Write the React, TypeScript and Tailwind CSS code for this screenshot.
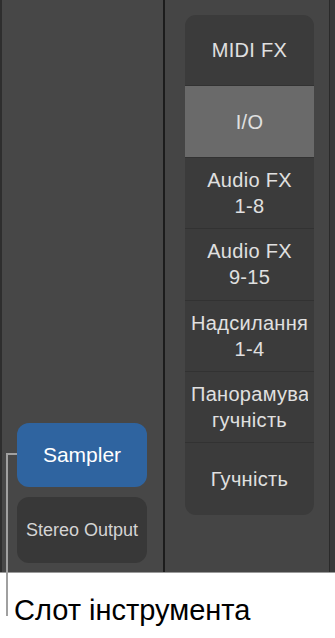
import React from "react";

const font = { fontFamily: '"Liberation Sans", Arial, sans-serif' };

function Row({ lines, active, last }: { lines: string[]; active?: boolean; last?: boolean }) {
  return (
    <div
      className={`h-[71.4px] flex flex-col items-center justify-center ${active ? "bg-[#6a6a6a]" : ""} ${last ? "" : "border-b border-[#323232]"}`}
    >
      <div className="w-[117px] overflow-hidden whitespace-nowrap text-center text-[20px] leading-[26px] tracking-[0.3px] text-[#e0e0e0]">
        {lines.map((l, i) => (
          <div key={i}>{l}</div>
        ))}
      </div>
    </div>
  );
}

export default function App() {
  return (
    <div className="relative w-[335px] h-[638px] bg-white overflow-hidden" style={font}>
      <div className="flex h-[573px] border-b border-[#9a9a9a]">
        <div className="w-[2px] bg-[#2e2e2e]" />
        <div className="w-[161px] bg-[#474747] flex flex-col justify-end pl-[15px] pb-[9px] gap-[10px]">
          <div className="w-[130px] h-[64px] rounded-[12px] bg-[#2f64a0] flex items-center justify-center text-white text-[21px]">
            Sampler
          </div>
          <div className="w-[130px] h-[66px] rounded-[12px] bg-[#383838] flex items-center justify-center text-[#d4d4d4] text-[18px] whitespace-nowrap">
            Stereo Output
          </div>
        </div>
        <div className="w-[2px] bg-[#1c1c1c]" />
        <div className="w-[164px] bg-[#454545] pl-[20px] pt-[15px]">
          <div className="w-[129px] h-[500px] rounded-[11px] bg-[#3b3b3b] overflow-hidden flex flex-col">
            <Row lines={["MIDI FX"]} />
            <Row lines={["I/O"]} active />
            <Row lines={["Audio FX", "1-8"]} />
            <Row lines={["Audio FX", "9-15"]} />
            <Row lines={["Надсилання", "1-4"]} />
            <Row lines={["Панорамування/", "гучність"]} />
            <Row lines={["Гучність"]} last />
          </div>
        </div>
        <div className="w-[6px] bg-[#3a3a3a] border-l border-[#2a2a2a]" />
      </div>
      {/* callout bracket */}
      <div className="absolute left-[6px] top-[453px] w-[11px] h-[2px] bg-[#a0a0a0]" />
      <div className="absolute left-[6px] top-[453px] w-[2px] h-[163px] bg-[#a0a0a0]" />
      <div className="absolute left-[14px] top-[592px] text-[29px] leading-[36px] text-black whitespace-nowrap">
        Слот інструмента
      </div>
    </div>
  );
}
